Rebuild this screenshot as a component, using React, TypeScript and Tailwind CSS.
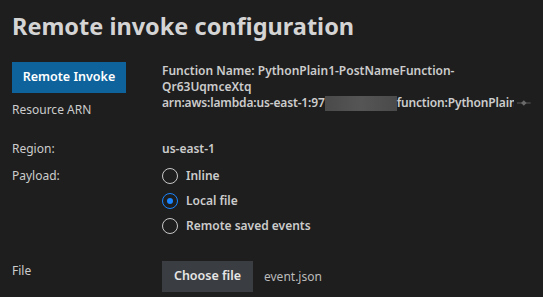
import React from 'react';

const font = { fontFamily: '"Noto Sans", "Open Sans", sans-serif' };

const Radio = ({ label, checked }: { label: string; checked?: boolean }) => (
  <label className="flex h-[25px] items-center gap-[8px] text-[12px] font-semibold text-[#cccccc]">
    <span
      className={`flex h-[16px] w-[16px] items-center justify-center rounded-full border ${
        checked ? 'border-[#1a85ff]' : 'border-[#c8c8c8]'
      }`}
    >
      {checked && <span className="h-[6px] w-[6px] rounded-full bg-[#1a85ff]" />}
    </span>
    {label}
  </label>
);

export default function App() {
  return (
    <div
      className="h-[297px] w-[543px] overflow-hidden bg-[#1e1e1e] px-3 text-[12px] text-[#cccccc]"
      style={font}
    >
      <h1 className="pt-[11px] text-[23.5px] leading-[30px] font-bold text-[#d4d4d4]">
        Remote invoke configuration
      </h1>

      <div className="mt-[21px] flex">
        <div className="w-[150px] shrink-0">
          <button className="h-[31px] w-[114px] bg-[#0e639c] text-[12.5px] font-semibold text-white">
            Remote Invoke
          </button>
          <div className="mt-[9px] leading-[16px]">Resource ARN</div>
        </div>
        <div className="min-w-0 flex-1 pt-[1px] font-semibold leading-[16px]">
          <div className="whitespace-nowrap">Function Name: PythonPlain1-PostNameFunction-</div>
          <div>Qr63UqmceXtq</div>
          <div className="flex items-center">
            <div className="flex w-[361px] items-center overflow-hidden whitespace-nowrap tracking-[-0.15px]">
              <span>arn:aws:lambda:us-east-1:97</span>
              <span className="h-[15px] w-[72px] shrink-0 bg-gradient-to-r from-[#4a4a4a] via-[#555555] to-[#4a4a4a]" />
              <span>function:PythonPlain1-PostNameFunction-Qr63UqmceXtq</span>
            </div>
            <svg width="14" height="8" viewBox="0 0 14 8" className="ml-[3px]">
              <line x1="0" y1="4" x2="14" y2="4" stroke="#5a5a5a" strokeWidth="1" />
              <rect x="5" y="2" width="4" height="4" fill="#6a6a6a" transform="rotate(45 7 4)" />
            </svg>
          </div>
        </div>
      </div>

      <div className="mt-[23px] flex leading-[16px]">
        <div className="w-[150px] shrink-0">Region:</div>
        <div className="font-semibold">us-east-1</div>
      </div>

      <div className="mt-[6px] flex">
        <div className="w-[150px] shrink-0 pt-[5px] leading-[16px]">Payload:</div>
        <div className="flex flex-col">
          <Radio label="Inline" />
          <Radio label="Local file" checked />
          <Radio label="Remote saved events" />
        </div>
      </div>

      <div className="mt-[23px] flex">
        <div className="w-[150px] shrink-0 pt-[2px] leading-[16px]">File</div>
        <div className="flex items-center gap-[11px]">
          <button className="h-[31px] w-[91px] bg-[#3a3d41] text-[12.5px] font-semibold text-[#e6e6e6]">
            Choose file
          </button>
          <span className="text-[#bbbbbb]">event.json</span>
        </div>
      </div>
    </div>
  );
}
